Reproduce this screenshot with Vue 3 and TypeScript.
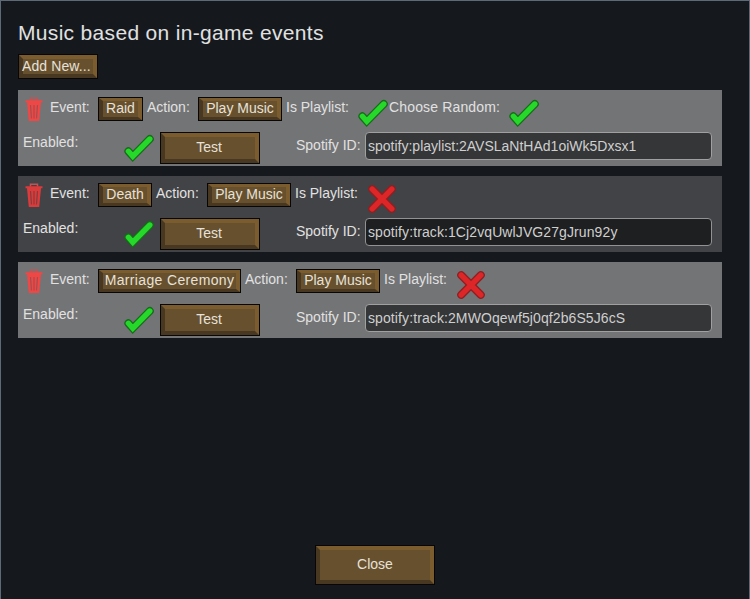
<script setup lang="ts">
import { ref } from 'vue'

interface MusicEvent {
  name: string
  width: number
  playlist: boolean
  random: boolean
  enabled: boolean
  spotifyId: string
}

const events = ref<MusicEvent[]>([
  { name: 'Raid', width: 45, playlist: true, random: true, enabled: true, spotifyId: 'spotify:playlist:2AVSLaNtHAd1oiWk5Dxsx1' },
  { name: 'Death', width: 54, playlist: false, random: false, enabled: true, spotifyId: 'spotify:track:1Cj2vqUwlJVG27gJrun92y' },
  { name: 'Marriage Ceremony', width: 143, playlist: false, random: false, enabled: true, spotifyId: 'spotify:track:2MWOqewf5j0qf2b6S5J6cS' },
])

const checkPath = 'M5.4 19.3L9.8 24.2L26.8 7'
const crossPath = 'M6.2 6.2L25.8 25.8M25.8 6.2L6.2 25.8'
</script>

<template>
  <main class="window">
    <h1 class="title">Music based on in-game events</h1>
    <button class="btn add"><span class="face">Add New...</span></button>

    <section class="list">
      <article v-for="(e, i) in events" :key="i" class="row" :class="{ dim: i % 2 === 1 }">
        <div class="line">
          <svg class="trash" viewBox="0 0 18 24">
            <path class="handle" d="M5.5 3.5V1.2H12.5V3.5" />
            <path class="bin" d="M.5 3.2H17.5V5.2H.5ZM2 5.2H16L14.2 24H3.8Z" />
            <path class="slots" d="M5.5 8L6.5 21.5M9 8V21.5M12.5 8L11.5 21.5" />
          </svg>
          <span class="label event">Event:</span>
          <button class="btn small" :class="{ wide: e.name.length > 12 }" :style="{ width: e.width + 'px' }"><span class="face">{{ e.name }}</span></button>
          <span class="label action">Action:</span>
          <button class="btn small play"><span class="face">Play Music</span></button>
          <span class="label playlist">Is Playlist:</span>
          <svg class="state" :class="e.playlist ? 'yes' : 'no'" viewBox="0 0 32 32">
            <path class="edge" :d="e.playlist ? checkPath : crossPath" />
            <path class="fill" :d="e.playlist ? checkPath : crossPath" />
          </svg>
          <template v-if="e.playlist">
            <span class="label random">Choose Random:</span>
            <svg class="state" :class="e.random ? 'yes' : 'no'" viewBox="0 0 32 32">
              <path class="edge" :d="e.random ? checkPath : crossPath" />
              <path class="fill" :d="e.random ? checkPath : crossPath" />
            </svg>
          </template>
        </div>
        <div class="line second">
          <span class="label enabled">Enabled:</span>
          <svg class="state" :class="e.enabled ? 'yes' : 'no'" viewBox="0 0 32 32">
            <path class="edge" :d="e.enabled ? checkPath : crossPath" />
            <path class="fill" :d="e.enabled ? checkPath : crossPath" />
          </svg>
          <button class="btn test"><span class="face">Test</span></button>
          <span class="label spotify">Spotify ID:</span>
          <input v-model="e.spotifyId" class="field" :class="{ track: !e.playlist }" spellcheck="false" />
        </div>
      </article>
    </section>

    <button class="btn close"><span class="face">Close</span></button>
  </main>
</template>

<style>
body {
  background: #15191d;
}
</style>

<style scoped>
.window {
  box-sizing: border-box;
  width: 750px;
  height: 599px;
  padding: 17px 27px 14px 17px;
  border: 1px solid #5d6976;
  border-bottom: 0;
  background: #15191d;
  color: #e1e1e1;
  font: 14px/20px "Liberation Sans", Arial, sans-serif;
  display: flex;
  flex-direction: column;
}
.title {
  margin: 0;
  height: 36px;
  font-size: 21px;
  line-height: 30px;
  font-weight: 400;
  letter-spacing: 0.32px;
  white-space: nowrap;
}
.btn {
  box-sizing: border-box;
  flex: none;
  display: flex;
  margin: 0;
  padding: 0;
  border: 1px solid #080706;
  border-radius: 0;
  background: #67502d;
  color: #e6e1da;
  font: inherit;
}
.face {
  box-sizing: border-box;
  flex: 1;
  align-self: stretch;
  display: flex;
  align-items: center;
  justify-content: center;
  padding-bottom: 2px;
  border: 4px solid;
  border-color: #7b5c2e #7b5c2e #493821 #493821;
  line-height: 12px;
  white-space: nowrap;
}
.add {
  width: 80px;
  height: 25px;
}
.add .face {
  justify-content: flex-start;
  padding-bottom: 1px;
  text-indent: -1px;
  letter-spacing: 0.1px;
}
.small {
  height: 24px;
}
.small .face {
  border-width: 3px 4px;
}
.wide {
  letter-spacing: 0.35px;
}
.play {
  width: 84px;
}
.list {
  display: flex;
  flex-direction: column;
  gap: 10px;
  margin-top: 11px;
}
.row {
  box-sizing: border-box;
  height: 76px;
  padding: 7px 10px 0 5px;
  background: #737476;
}
.row.dim {
  background: #424346;
}
.line {
  display: flex;
  align-items: flex-start;
  height: 35px;
}
.label {
  flex: none;
  white-space: nowrap;
}
.event { width: 48px; }
.action { width: 51px; padding-left: 4px; }
.playlist { width: 71px; padding-left: 4px; }
.random { width: 119px; letter-spacing: 0.15px; }
.enabled { width: 100px; }
.spotify { width: 69px; margin-left: 36px; padding-top: 3px; }
.test {
  width: 100px;
  height: 32px;
  margin-left: 5px;
}
.test .face {
  padding-right: 2px;
}
.field {
  box-sizing: border-box;
  width: 347px;
  height: 28px;
  margin: 0;
  padding: 0 2px;
  border: 1px solid #a0a0a1;
  border-radius: 4px;
  outline: 0;
  background: #353638;
  color: #cfcfcf;
  font: inherit;
}
.track {
  letter-spacing: 0.1px;
}
.dim .field {
  background: #1e1f20;
  border-color: #929294;
}
.trash {
  flex: none;
  width: 18px;
  height: 24px;
  margin: 0 7px 0 2px;
}
.handle {
  fill: none;
  stroke: #c85052;
  stroke-width: 1.5;
}
.bin {
  fill: #ee4746;
}
.slots {
  fill: none;
  stroke: #a54c4d;
  stroke-width: 1.2;
}
.dim .bin {
  fill: #dc3b3b;
}
.dim .slots {
  stroke: #853b3d;
}
.state {
  flex: none;
  width: 32px;
  height: 32px;
}
.state path {
  fill: none;
  stroke-linecap: round;
  stroke-linejoin: miter;
}
.edge { stroke-width: 8; }
.fill { stroke-width: 5.4; }
.yes .edge { stroke: #176b1a; }
.yes .fill { stroke: #25d829; }
.no .edge { stroke: #8d2022; }
.no .fill { stroke: #dc2628; }
.close {
  width: 120px;
  height: 40px;
  margin: auto 0 0 297px;
}
</style>
